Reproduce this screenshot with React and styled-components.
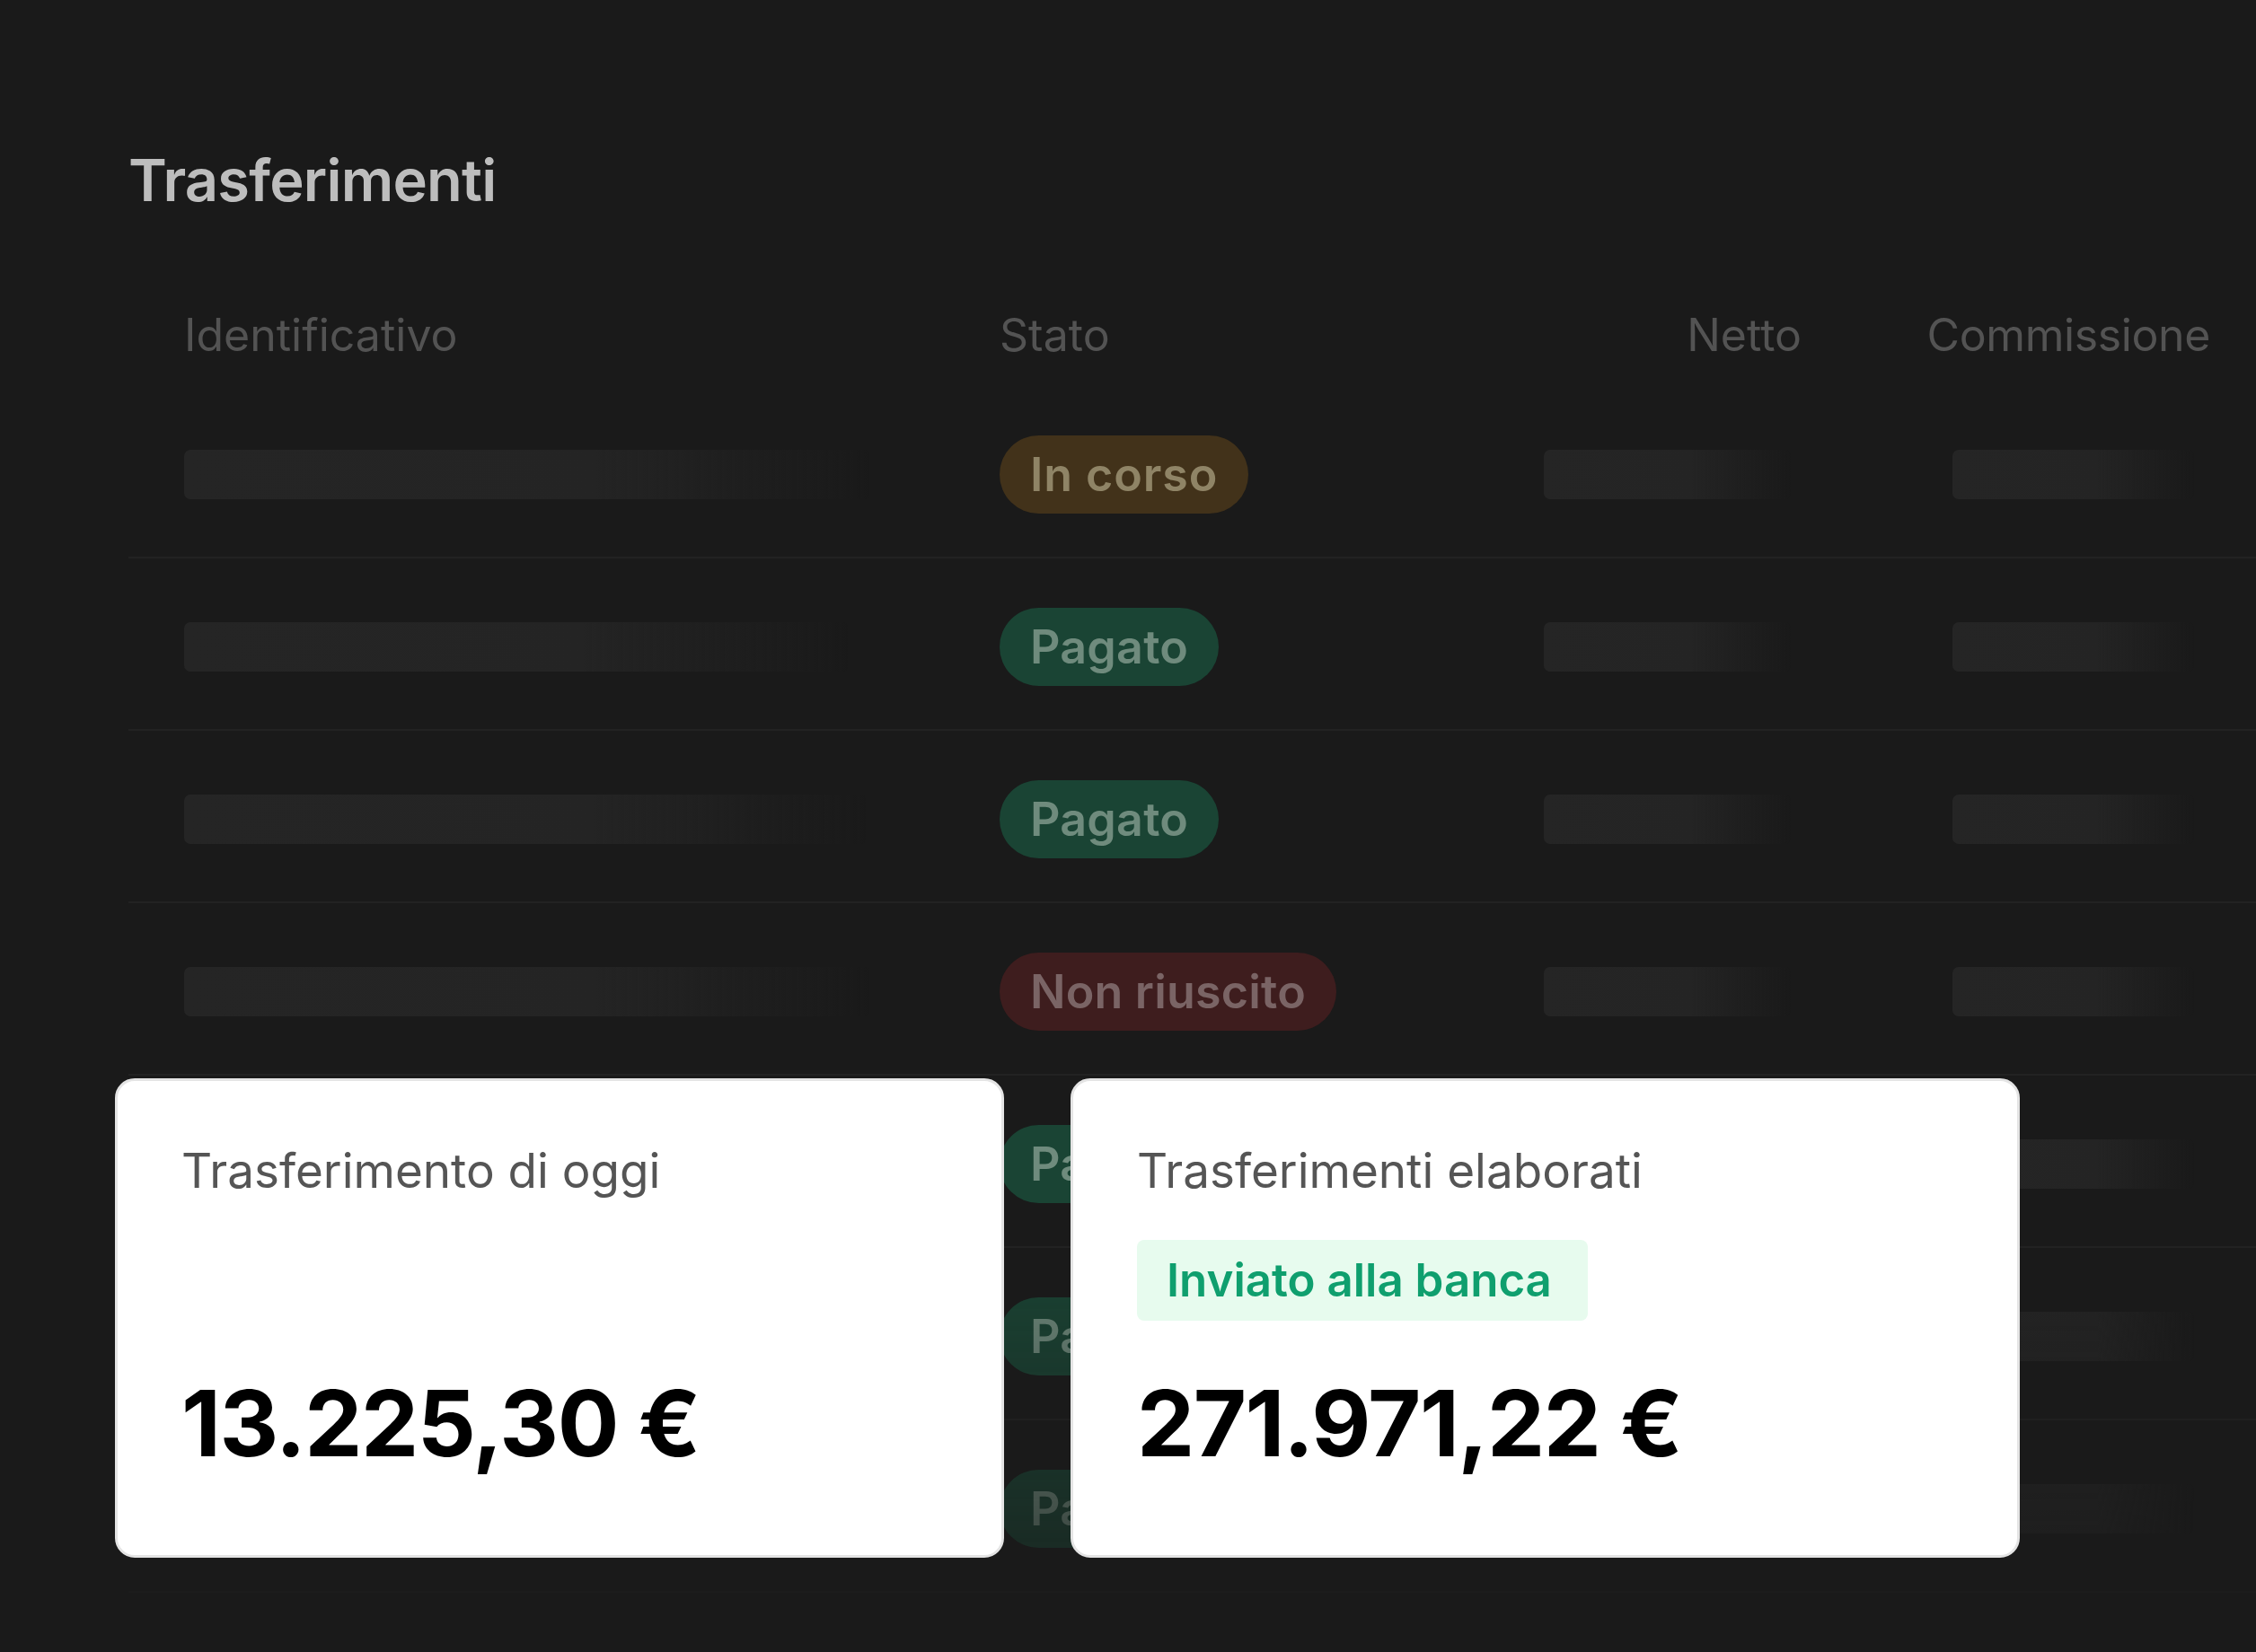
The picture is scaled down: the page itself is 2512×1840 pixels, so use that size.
import React from "react";
import styled, { createGlobalStyle } from "styled-components";

const Global = createGlobalStyle`
  html, body { margin: 0; padding: 0; background: #1a1a1a; }
  body { font-family: Inter, "Noto Sans", sans-serif; width: 2512px; height: 1840px; overflow: hidden; }
  #root { width: 2512px; height: 1840px; }
`;

const Page = styled.div`
  position: relative;
  width: 2512px;
  height: 1840px;
  background: #1a1a1a;
  box-sizing: border-box;
  padding: 168px 0 0 143px;
  overflow: hidden;
`;

const Title = styled.h1`
  margin: 0;
  font-size: 65px;
  line-height: 1;
  font-weight: 600;
  color: #bdbdbd;
  letter-spacing: -0.8px;
`;

const Table = styled.div`
  margin-top: 82px;
  width: 2420px;
  -webkit-mask-image: linear-gradient(to bottom, #000 0, #000 1050px, rgba(0,0,0,0.35) 1450px, rgba(0,0,0,0.1) 1560px, rgba(0,0,0,0) 1640px);
  mask-image: linear-gradient(to bottom, #000 0, #000 1050px, rgba(0,0,0,0.35) 1450px, rgba(0,0,0,0.1) 1560px, rgba(0,0,0,0) 1640px);
`;

const Row = styled.div`
  box-sizing: border-box;
  display: grid;
  grid-template-columns: 908px 606px 287px 455px;
  align-items: center;
  padding-left: 62px;
  padding-top: ${(p) => (p.$header ? "0" : "6px")};
  height: ${(p) => (p.$header ? "115px" : "192px")};
  border-bottom: ${(p) => (p.$header ? "none" : "2px solid #222222")};
`;

const HeadCell = styled.div`
  font-size: 50px;
  font-weight: 400;
  color: #535353;
  letter-spacing: ${(p) => (p.$tight ? "-0.4px" : "0")};
  text-align: ${(p) => (p.$right ? "right" : "left")};
  white-space: nowrap;
`;

const Cell = styled.div`
  display: flex;
  align-items: center;
  padding-left: ${(p) => p.$indent || 0}px;
`;

const Bar = styled.div`
  height: 55px;
  border-radius: 7px;
  background: linear-gradient(to right, #252525 0%, #242424 60%, rgba(36,36,36,0) 100%);
`;

const tones = {
  warn: { bg: "#42321a", fg: "#8f8466" },
  ok: { bg: "#1a4434", fg: "#6f8b7d" },
  fail: { bg: "#3e1d1e", fg: "#7a6465" },
};

const Pill = styled.span`
  display: inline-flex;
  align-items: center;
  height: 87px;
  padding: 0 34px;
  border-radius: 44px;
  font-size: 52px;
  font-weight: 600;
  letter-spacing: ${(p) => (p.$tone === "warn" ? "0.9px" : "0.2px")};
  background: ${(p) => tones[p.$tone].bg};
  color: ${(p) => tones[p.$tone].fg};
  white-space: nowrap;
`;

const Cards = styled.div`
  position: absolute;
  left: 128px;
  top: 1201px;
  display: flex;
  gap: 74px;
`;

const Card = styled.div`
  box-sizing: border-box;
  width: ${(p) => p.$w}px;
  height: 534px;
  background: #ffffff;
  border: 3px solid #e4e4e4;
  border-radius: 22px;
  padding: 69px 60px 96px 71px;
  display: flex;
  flex-direction: column;
`;

const Label = styled.div`
  font-size: 53px;
  line-height: 1.2;
  color: #555555;
  font-weight: 400;
  white-space: nowrap;
`;

const Badge = styled.div`
  align-self: flex-start;
  margin-top: 44px;
  height: 90px;
  display: flex;
  align-items: center;
  padding: 0 40px 0 33px;
  border-radius: 8px;
  background: #e7fbee;
  color: #0f9f6e;
  font-size: 51px;
  font-weight: 600;
  white-space: nowrap;
`;

const Amount = styled.div`
  margin-top: auto;
  font-size: 102px;
  line-height: 1;
  font-weight: 700;
  color: #000;
  letter-spacing: -1.5px;
  white-space: nowrap;
`;

const rows = [
  { tone: "warn", label: "In corso", w1: 764 },
  { tone: "ok", label: "Pagato", w1: 740 },
  { tone: "ok", label: "Pagato", w1: 760 },
  { tone: "fail", label: "Non riuscito", w1: 764 },
  { tone: "ok", label: "Pagato", w1: 760 },
  { tone: "ok", label: "Pagato", w1: 760 },
  { tone: "ok", label: "Pagato", w1: 760 },
];

export default function App() {
  return (
    <Page>
      <Global />
      <Title>Trasferimenti</Title>
      <Table>
        <Row $header>
          <HeadCell>Identificativo</HeadCell>
          <HeadCell>Stato</HeadCell>
          <HeadCell $right>Netto</HeadCell>
          <HeadCell $right $tight>Commissione</HeadCell>
        </Row>
        {rows.map((r, i) => (
          <Row key={i}>
            <Cell>
              <Bar style={{ width: r.w1 }} />
            </Cell>
            <Cell>
              <Pill $tone={r.tone}>{r.label}</Pill>
            </Cell>
            <Cell>
              <Bar style={{ width: 275 }} />
            </Cell>
            <Cell $indent={168}>
              <Bar style={{ width: 269 }} />
            </Cell>
          </Row>
        ))}
      </Table>
      <Cards>
        <Card $w={990}>
          <Label>Trasferimento di oggi</Label>
          <Amount>13.225,30 €</Amount>
        </Card>
        <Card $w={1057}>
          <Label>Trasferimenti elaborati</Label>
          <Badge>Inviato alla banca</Badge>
          <Amount>271.971,22 €</Amount>
        </Card>
      </Cards>
    </Page>
  );
}
